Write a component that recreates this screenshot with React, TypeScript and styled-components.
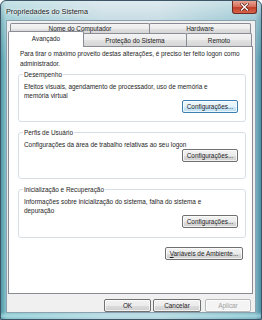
import React from "react";
import styled, { createGlobalStyle } from "styled-components";

const Global = createGlobalStyle`
  html, body { margin: 0; padding: 0; background: #ffffff; }
  body { width: 262px; height: 320px; overflow: hidden; font-family: "Liberation Sans", Arial, sans-serif; }
`;

const Window = styled.div`
  width: 262px;
  height: 320px;
  box-sizing: border-box;
  border: 1px solid #3d5566;
  border-radius: 6px 6px 0 0;
  background:
    linear-gradient(180deg, rgba(255,255,255,0.55) 0px, rgba(255,255,255,0.25) 19px, rgba(255,255,255,0) 60px),
    linear-gradient(0deg, rgba(255,255,255,0) 0px, rgba(190,235,240,0.6) 3px, rgba(255,255,255,0) 7px),
    linear-gradient(90deg, #4f98a6 0px, #85c1ca 5px, #b7d2dc 40%, #b7d2dc 60%, #7db6c4 calc(100% - 6px), #4f8fa4 100%);
  display: flex;
  flex-direction: column;
  padding: 0 5px 6px 5px;
`;

const TitleBar = styled.div`
  height: 19px;
  display: flex;
  align-items: flex-start;
  justify-content: space-between;
`;

const Title = styled.span`
  font-size: 7.3px;
  color: #1b1b1b;
  margin: 6px 0 0 0;
  text-shadow: 0 0 4px #ffffff, 0 0 2px #ffffff;
`;

const CloseButton = styled.div`
  width: 25px;
  height: 13px;
  margin: 0 -1px 0 0;
  box-sizing: border-box;
  border: 1px solid #6b2a22;
  border-top: none;
  border-radius: 0 0 3px 3px;
  background: linear-gradient(180deg, #e8a393 0%, #d7725e 45%, #c0402a 55%, #d9644a 100%);
  display: flex;
  align-items: center;
  justify-content: center;
`;

const Client = styled.div`
  flex: 1;
  background: #f0f0f0;
  border: 1px solid #8aa2b0;
  display: flex;
  flex-direction: column;
  padding: 2px 2px 0 1px;
`;

const TabRow = styled.div<{ $inset?: number }>`
  display: flex;
  padding-left: ${(p) => p.$inset ?? 0}px;
`;

const Tab = styled.div<{ $w: number; $h: number; $active?: boolean }>`
  width: ${(p) => p.$w}px;
  height: ${(p) => (p.$active ? p.$h + 3 : p.$h)}px;
  margin-top: ${(p) => (p.$active ? -2 : 0)}px;
  padding-bottom: ${(p) => (p.$active ? 3 : 0)}px;
  position: relative;
  z-index: ${(p) => (p.$active ? 2 : 0)};
  box-sizing: border-box;
  border: 1px solid #898c95;
  border-bottom: none;
  margin-right: -1px;
  border-radius: 2px 2px 0 0;
  background: ${(p) =>
    p.$active ? "#ffffff" : "linear-gradient(180deg, #f4f4f4 0%, #ececec 50%, #e2e2e2 51%, #d6d6d6 100%)"};
  font-size: 6.4px;
  color: #1e1e1e;
  display: flex;
  align-items: center;
  justify-content: center;
`;

const Panel = styled.div`
  height: 248px;
  background: #ffffff;
  border: 1px solid #898c95;
  box-sizing: border-box;
  margin-top: -1px;
  padding: 2px 6px 0 9px;
  display: flex;
  flex-direction: column;
`;

const Intro = styled.p`
  margin: 0 0 0 2px;
  font-size: 6.4px;
  line-height: 9.5px;
  color: #1e1e1e;
`;

const Text = styled.p`
  margin: 0;
  font-size: 6.4px;
  line-height: 9px;
  color: #1e1e1e;
`;

const Group = styled.fieldset<{ $h: number; $mt: number }>`
  margin: ${(p) => p.$mt}px 0 0 0;
  padding: 0 7px 6px 5px;
  height: ${(p) => p.$h}px;
  box-sizing: border-box;
  border: 1px solid #d5dfe5;
  border-radius: 3px;
  display: flex;
  flex-direction: column;
  min-width: 0;
`;

const Legend = styled.legend`
  font-size: 6.4px;
  color: #1e1e1e;
  padding: 0 1px;
  margin-left: -1px;
  line-height: 9px;
`;

const GroupBody = styled.div`
  flex: 1;
  display: flex;
  flex-direction: column;
  justify-content: space-between;
  padding-top: 3px;
`;

const RightRow = styled.div<{ $mt?: number; $mr?: number }>`
  display: flex;
  justify-content: flex-end;
  margin-top: ${(p) => p.$mt ?? 0}px;
  margin-right: ${(p) => p.$mr ?? 0}px;
`;

const Button = styled.div<{ $w: number; $focus?: boolean; $disabled?: boolean }>`
  width: ${(p) => p.$w}px;
  height: 13px;
  box-sizing: border-box;
  border: 1px solid ${(p) => (p.$focus ? "#3c7fb1" : p.$disabled ? "#b5b9bc" : "#707070")};
  border-radius: 2px;
  background: ${(p) =>
    p.$disabled
      ? "#f4f4f4"
      : p.$focus
      ? "linear-gradient(180deg, #f0f8fd 0%, #e3f2fb 50%, #cde8f8 51%, #bfe0f4 100%)"
      : "linear-gradient(180deg, #f2f2f2 0%, #ebebeb 50%, #dddddd 51%, #cfcfcf 100%)"};
  box-shadow: inset 0 0 0 1px rgba(255,255,255,0.7);
  font-size: 6.4px;
  color: ${(p) => (p.$disabled ? "#a0a0a0" : "#1e1e1e")};
  display: flex;
  align-items: center;
  justify-content: center;
  white-space: nowrap;
`;

const Footer = styled.div`
  display: flex;
  justify-content: flex-end;
  align-items: center;
  padding: 5px 2px 0 0;
`;

const FooterButton = styled(Button)<{ $gap: number }>`
  margin-left: ${(p) => p.$gap}px;
`;

const U = styled.span`
  text-decoration: underline;
`;

export default function App() {
  return (
    <>
      <Global />
      <Window>
        <TitleBar>
          <Title>Propriedades do Sistema</Title>
          <CloseButton>
            <svg width="9" height="8" viewBox="0 0 9 8">
              <path d="M1.5 1 L7.5 7 M7.5 1 L1.5 7" stroke="#5a1a10" strokeWidth="2.6" strokeLinecap="square" />
              <path d="M1.5 1 L7.5 7 M7.5 1 L1.5 7" stroke="#ffffff" strokeWidth="1.4" strokeLinecap="square" />
            </svg>
          </CloseButton>
        </TitleBar>
        <Client>
          <TabRow $inset={2}>
            <Tab $w={140} $h={10}>Nome do Computador</Tab>
            <Tab $w={102} $h={10}>Hardware</Tab>
          </TabRow>
          <TabRow>
            <Tab $w={76} $h={13} $active>Avançado</Tab>
            <Tab $w={104} $h={13}>Proteção do Sistema</Tab>
            <Tab $w={66} $h={13}>Remoto</Tab>
          </TabRow>
          <Panel>
            <Intro>
              Para tirar o máximo proveito destas alterações, é preciso ter feito logon como administrador.
            </Intro>
            <Group $h={52} $mt={1.5}>
              <Legend>Desempenho</Legend>
              <GroupBody>
                <Text>
                  Efeitos visuais, agendamento de processador, uso de memória e
                  <br />
                  memória virtual
                </Text>
                <RightRow>
                  <Button $w={56} $focus>Configurações...</Button>
                </RightRow>
              </GroupBody>
            </Group>
            <Group $h={51.5} $mt={6}>
              <Legend>Perfis de Usuário</Legend>
              <GroupBody>
                <Text>Configurações da área de trabalho relativas ao seu logon</Text>
                <RightRow>
                  <Button $w={56}>Configurações...</Button>
                </RightRow>
              </GroupBody>
            </Group>
            <Group $h={53} $mt={6}>
              <Legend>Inicialização e Recuperação</Legend>
              <GroupBody>
                <Text>
                  Informações sobre inicialização do sistema, falha do sistema e
                  <br />
                  depuração
                </Text>
                <RightRow>
                  <Button $w={56}>Configurações...</Button>
                </RightRow>
              </GroupBody>
            </Group>
            <RightRow $mt={9} $mr={3}>
              <Button $w={78}>
                <span>
                  <U>V</U>ariáveis de Ambiente...
                </span>
              </Button>
            </RightRow>
          </Panel>
          <Footer>
            <FooterButton $w={47} $gap={0}>OK</FooterButton>
            <FooterButton $w={48} $gap={2}>Cancelar</FooterButton>
            <FooterButton $w={46} $gap={4} $disabled>Aplicar</FooterButton>
          </Footer>
        </Client>
      </Window>
    </>
  );
}
